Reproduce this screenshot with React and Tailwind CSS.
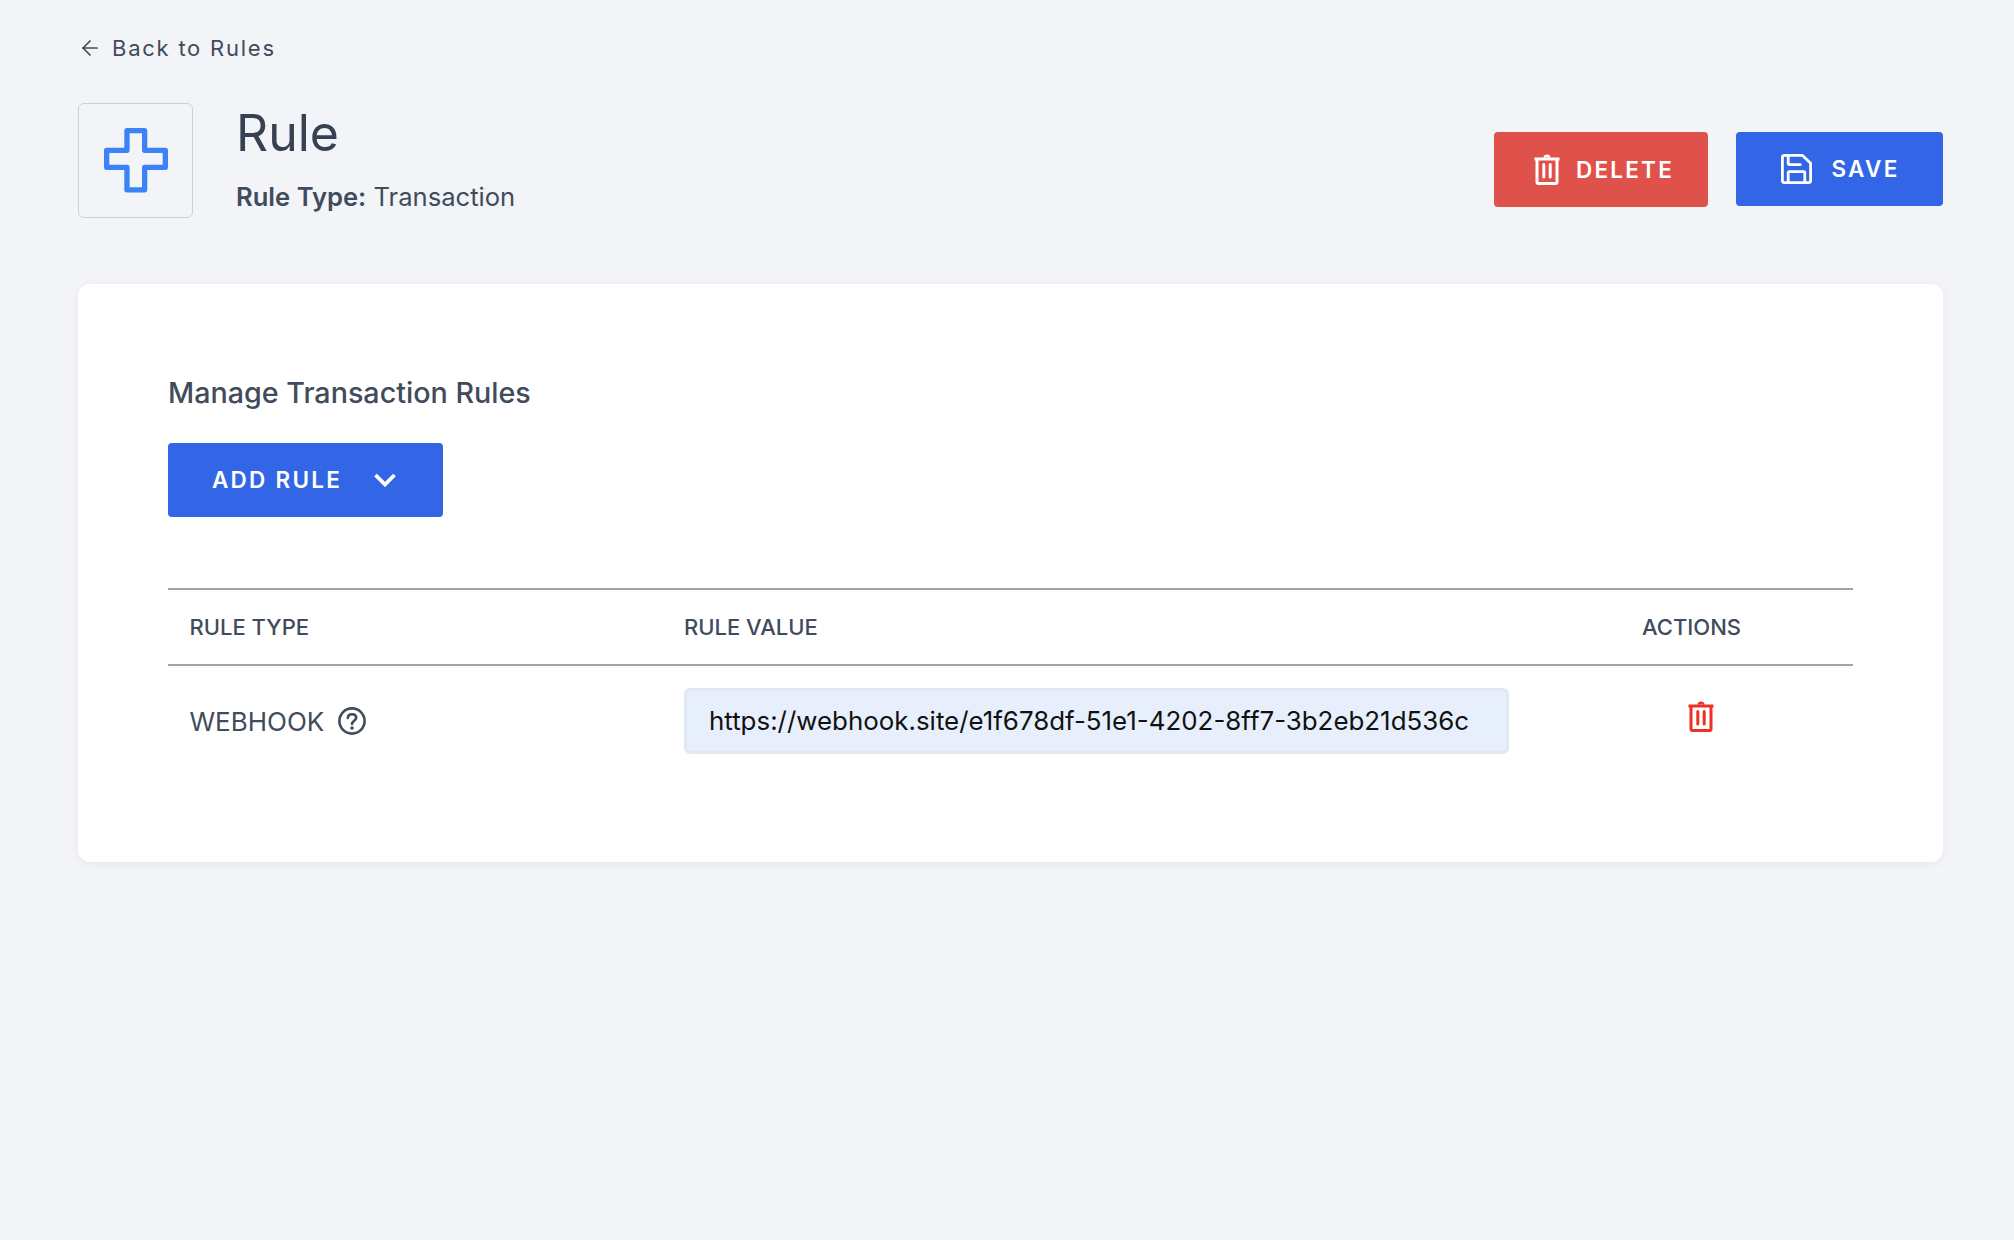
import React from 'react'
import { ArrowLeft } from 'lucide-react'

const TrashIcon = ({ className }) => (
    <svg viewBox="0 0 26 31" fill="none" stroke="currentColor" strokeWidth="3" className={className}>
        <path d="M0.5 5H25.5" strokeWidth="3" />
        <path d="M10 3.6C10.4 0.4 15.6 0.4 16 3.6" fill="currentColor" strokeWidth="1.2" />
        <path d="M3 5V28C3 28.9 3.6 29.5 4.5 29.5H21.5C22.4 29.5 23 28.9 23 28V5" strokeLinejoin="round" />
        <path d="M9.8 10.5V23M16.2 10.5V23" strokeLinecap="round" />
    </svg>
)

const SaveIcon = ({ className }) => (
    <svg viewBox="0 0 31 30" fill="none" stroke="currentColor" strokeWidth="2.8" strokeLinejoin="round" className={className}>
        <path d="M1.4 3.2C1.4 2 2.2 1.4 3.4 1.4H21.5L29.6 9.2V26.8C29.6 28 28.8 28.6 27.6 28.6H3.4C2.2 28.6 1.4 28 1.4 26.8Z" />
        <path d="M7.2 1.5V9.6C7.2 10.2 7.6 10.6 8.2 10.6H20.4" />
        <path d="M7.2 28.5V18.6C7.2 18 7.6 17.6 8.2 17.6H22.8C23.4 17.6 23.8 18 23.8 18.6V28.5" />
    </svg>
)

const App = () => {
    return (
        <div className="min-h-[1240px] bg-[#f3f4f8] pr-[71px] pl-[78px] pt-[34px] font-['Inter',sans-serif] text-[#374151]">
            <div className="flex h-[28px] items-center gap-[10px] text-[#414b5c]">
                <ArrowLeft className="h-[24px] w-[24px]" strokeWidth={1.7} />
                <span className="text-[22px] tracking-[0.08em]">Back to Rules</span>
            </div>

            <div className="mt-[41px] flex items-start justify-between">
                <div className="flex items-start gap-[43px]">
                    <div className="flex h-[115px] w-[115px] items-center justify-center rounded-[6px] border border-[#cdd0d6]">
                        <svg viewBox="0 0 65 65" fill="none" stroke="#3b82f6" strokeWidth="5.3" strokeLinejoin="round" className="h-[65px] w-[65px]">
                            <path d="M23.95 2.65H41.65V22.35H62.35V39.35H41.65V61.85H23.95V39.35H3.65V22.35H23.95Z" />
                        </svg>
                    </div>
                    <div>
                        <h1 className="text-[50px] leading-[60px] font-normal">Rule</h1>
                        <p className="mt-[18px] text-[25.6px] leading-[32px] text-[#414b5c]">
                            <span className="font-semibold">Rule Type:</span> Transaction
                        </p>
                    </div>
                </div>
                <div className="mt-[29px] flex items-start gap-[28px]">
                    <button className="flex h-[75px] w-[214px] items-center justify-center gap-[16px] rounded-[4px] bg-[#df524b] pl-[6px] text-[22.5px] font-semibold tracking-[0.1em] text-white">
                        <TrashIcon className="h-[31px] w-[26px]" />
                        DELETE
                    </button>
                    <button className="flex h-[74px] w-[207px] items-center justify-center gap-[19px] rounded-[4px] bg-[#3366e6] pl-[2px] text-[22.5px] font-semibold tracking-[0.1em] text-white">
                        <SaveIcon className="h-[30px] w-[31px]" />
                        SAVE
                    </button>
                </div>
            </div>

            <div className="mt-[66px] h-[578px] rounded-[12px] bg-white px-[90px] pt-[89px] shadow-[0_2px_8px_rgba(30,41,59,0.06)]">
                <h2 className="text-[28.7px] leading-[40px] font-medium text-[#414b5c]">Manage Transaction Rules</h2>
                <button className="mt-[30px] flex h-[74px] w-[275px] items-center gap-[32px] rounded-[4px] bg-[#3366e6] pl-[44px] text-[22.5px] font-semibold tracking-[0.1em] text-white">
                    ADD RULE
                    <svg viewBox="0 0 22 14" fill="none" stroke="currentColor" strokeWidth="3.8" className="h-[14px] w-[22px]">
                        <path d="M1.5 2L11 11.5L20.5 2" />
                    </svg>
                </button>

                <div className="mt-[71px] border-y-2 border-[#a3a3a3]">
                    <div className="grid h-[74px] grid-cols-[516px_958px_1fr] items-center text-[22px] font-medium text-[#414b5c]">
                        <span className="pl-[21.5px]">RULE TYPE</span>
                        <span>RULE VALUE</span>
                        <span>ACTIONS</span>
                    </div>
                </div>
                <div className="grid grid-cols-[516px_958px_1fr] pt-[22px]">
                    <div className="flex h-[66px] items-center gap-[14px] pl-[21.5px] text-[26px] text-[#414b5c]">
                        WEBHOOK
                        <svg viewBox="0 0 28 28" fill="none" stroke="currentColor" strokeWidth="2.6" className="h-[28px] w-[28px]">
                            <circle cx="14" cy="14" r="12.6" />
                            <path d="M9.8 11C10 8.4 11.8 7.2 14 7.2C16.4 7.2 18.2 8.6 18.2 10.8C18.2 13.6 14 14 14 17" strokeLinecap="round" />
                            <circle cx="14" cy="21" r="1.8" fill="currentColor" stroke="none" />
                        </svg>
                    </div>
                    <div className="flex h-[66px] w-[825px] items-center rounded-[6px] border-[3px] border-[#e2e8f0] bg-[#e8effc] pl-[22px] text-[25.9px] text-[#111111]">
                        https://webhook.site/e1f678df-51e1-4202-8ff7-3b2eb21d536c
                    </div>
                    <div className="pt-[13px] pl-[46px] text-[#ee3124]">
                        <TrashIcon className="h-[31px] w-[26px]" />
                    </div>
                </div>
            </div>
        </div>
    )
}

export default App
